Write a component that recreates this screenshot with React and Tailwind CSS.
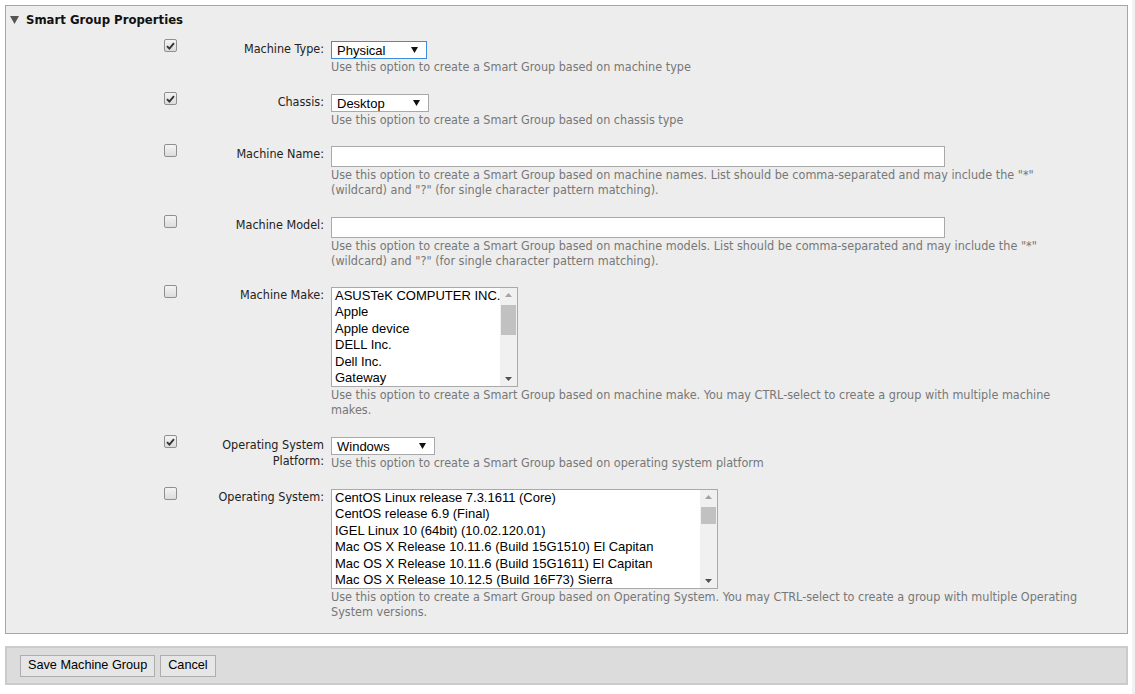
import React from "react";

const uiFont = { fontFamily: '"DejaVu Sans Condensed", "DejaVu Sans", sans-serif' };

const Check = ({ checked }) => (
  <div className="w-[13px] h-[13px] border border-[#8f8f8f] rounded-[2px] bg-gradient-to-b from-[#f4f4f4] to-[#dcdcdc] flex items-center justify-center">
    {checked && (
      <svg width="9" height="8" viewBox="0 0 9 8">
        <path d="M1 4.2 L3.4 6.6 L8 1.2" fill="none" stroke="#333" strokeWidth="1.9" />
      </svg>
    )}
  </div>
);

const Select = ({ value, width, focused }) => (
  <div
    className={`h-[18px] bg-white border flex items-center justify-between pl-[5px] pr-[8px] text-[13px] text-black font-['Liberation_Sans',Arial,sans-serif] ${
      focused ? "border-[#3c8cde]" : "border-[#a9a9a9]"
    }`}
    style={{ width }}
  >
    <span className="pt-[1px]">{value}</span>
    <svg width="7" height="6" viewBox="0 0 7 6">
      <path d="M0 0 H7 L3.5 6 Z" fill="#111" />
    </svg>
  </div>
);

const ListBox = ({ items, width, thumbTop, thumbHeight }) => (
  <div
    className="h-[100px] bg-white border border-[#a9a9a9] flex font-['Liberation_Sans',Arial,sans-serif] text-[13px] text-black"
    style={{ width }}
  >
    <div className="flex-1 overflow-hidden pl-[3px] leading-[16.4px] whitespace-nowrap">
      {items.map((it) => (
        <div key={it}>{it}</div>
      ))}
    </div>
    <div className="w-[17px] bg-[#f0f0f0] flex flex-col items-center justify-between py-[5px] relative">
      <svg width="7" height="4" viewBox="0 0 7 4">
        <path d="M0 4 H7 L3.5 0 Z" fill="#a3a3a3" />
      </svg>
      <div
        className="absolute left-[1px] right-[1px] bg-[#c1c1c1]"
        style={{ top: thumbTop, height: thumbHeight }}
      />
      <svg width="7" height="4" viewBox="0 0 7 4">
        <path d="M0 0 H7 L3.5 4 Z" fill="#505050" />
      </svg>
    </div>
  </div>
);

const Row = ({ checked, label, children, help, extra }) => (
  <div className={`flex ${extra ? "mt-[1px]" : ""}`}>
    <div className="w-[171px] pl-[158px] mt-[-2px]">
      <Check checked={checked} />
    </div>
    <div className="w-[148px] text-right text-[12.5px] leading-[16px] text-[#222] pr-[1px]">{label}</div>
    <div className="ml-[6px] flex flex-col">
      {children}
      <div className="text-[12.5px] leading-[15px] text-[#777] whitespace-nowrap">{help}</div>
    </div>
  </div>
);

export default function App() {
  return (
    <div className="min-h-[694px] bg-white flex" style={uiFont}>
      <div className="w-[1132px] pl-[5px] pr-[4px] pt-[5px]">
        <div className="border border-[#a6a6a6] bg-[#ededed] pb-[14px]">
          <div className="h-[28px] flex items-center pl-[4px]">
            <svg width="9" height="8" viewBox="0 0 9 8" className="mr-[7px]">
              <path d="M0 0 H9 L4.5 8 Z" fill="#555" />
            </svg>
            <span className="text-[13px] font-bold text-[#111]">Smart Group Properties</span>
          </div>
          <div className="pt-[7px] flex flex-col gap-[19px]">
            <Row checked label="Machine Type:" help="Use this option to create a Smart Group based on machine type">
              <Select value="Physical" width={96} focused />
            </Row>
            <Row checked extra label="Chassis:" help="Use this option to create a Smart Group based on chassis type">
              <Select value="Desktop" width={98} />
            </Row>
            <Row
              label="Machine Name:"
              help={
                <>
                  Use this option to create a Smart Group based on machine names. List should be comma-separated and may include the "*"
                  <br />
                  (wildcard) and "?" (for single character pattern matching).
                </>
              }
            >
              <div className="w-[614px] h-[21px] bg-white border border-[#a9a9a9]" />
            </Row>
            <Row
              extra
              label="Machine Model:"
              help={
                <>
                  Use this option to create a Smart Group based on machine models. List should be comma-separated and may include the "*"
                  <br />
                  (wildcard) and "?" (for single character pattern matching).
                </>
              }
            >
              <div className="w-[614px] h-[21px] bg-white border border-[#a9a9a9]" />
            </Row>
            <Row
              label="Machine Make:"
              help={
                <>
                  Use this option to create a Smart Group based on machine make. You may CTRL-select to create a group with multiple machine
                  <br />
                  makes.
                </>
              }
            >
              <ListBox
                width={187}
                thumbTop={17}
                thumbHeight={30}
                items={["ASUSTeK COMPUTER INC.", "Apple", "Apple device", "DELL Inc.", "Dell Inc.", "Gateway"]}
              />
            </Row>
            <Row
              checked
              extra
              label={
                <>
                  Operating System
                  <br />
                  Platform:
                </>
              }
              help="Use this option to create a Smart Group based on operating system platform"
            >
              <Select value="Windows" width={104} />
            </Row>
            <Row
              label="Operating System:"
              help={
                <>
                  Use this option to create a Smart Group based on Operating System. You may CTRL-select to create a group with multiple Operating
                  <br />
                  System versions.
                </>
              }
            >
              <ListBox
                width={387}
                thumbTop={17}
                thumbHeight={17}
                items={[
                  "CentOS Linux release 7.3.1611 (Core)",
                  "CentOS release 6.9 (Final)",
                  "IGEL Linux 10 (64bit) (10.02.120.01)",
                  "Mac OS X Release 10.11.6 (Build 15G1510) El Capitan",
                  "Mac OS X Release 10.11.6 (Build 15G1611) El Capitan",
                  "Mac OS X Release 10.12.5 (Build 16F73) Sierra",
                ]}
              />
            </Row>
          </div>
        </div>
        <div className="mt-[12px] h-[39px] bg-[#dcdcdc] border-2 border-[#cbcbcb] flex items-center gap-[5px] pl-[13px] font-['Liberation_Sans',Arial,sans-serif] text-[12.7px] text-black">
          <button className="h-[22px] px-[7px] bg-[#e6e6e6] border border-[#adadad]">Save Machine Group</button>
          <button className="h-[22px] px-[7px] bg-[#e6e6e6] border border-[#adadad]">Cancel</button>
        </div>
      </div>
      <div className="w-[3px] bg-[#f2f2f2]" />
    </div>
  );
}
